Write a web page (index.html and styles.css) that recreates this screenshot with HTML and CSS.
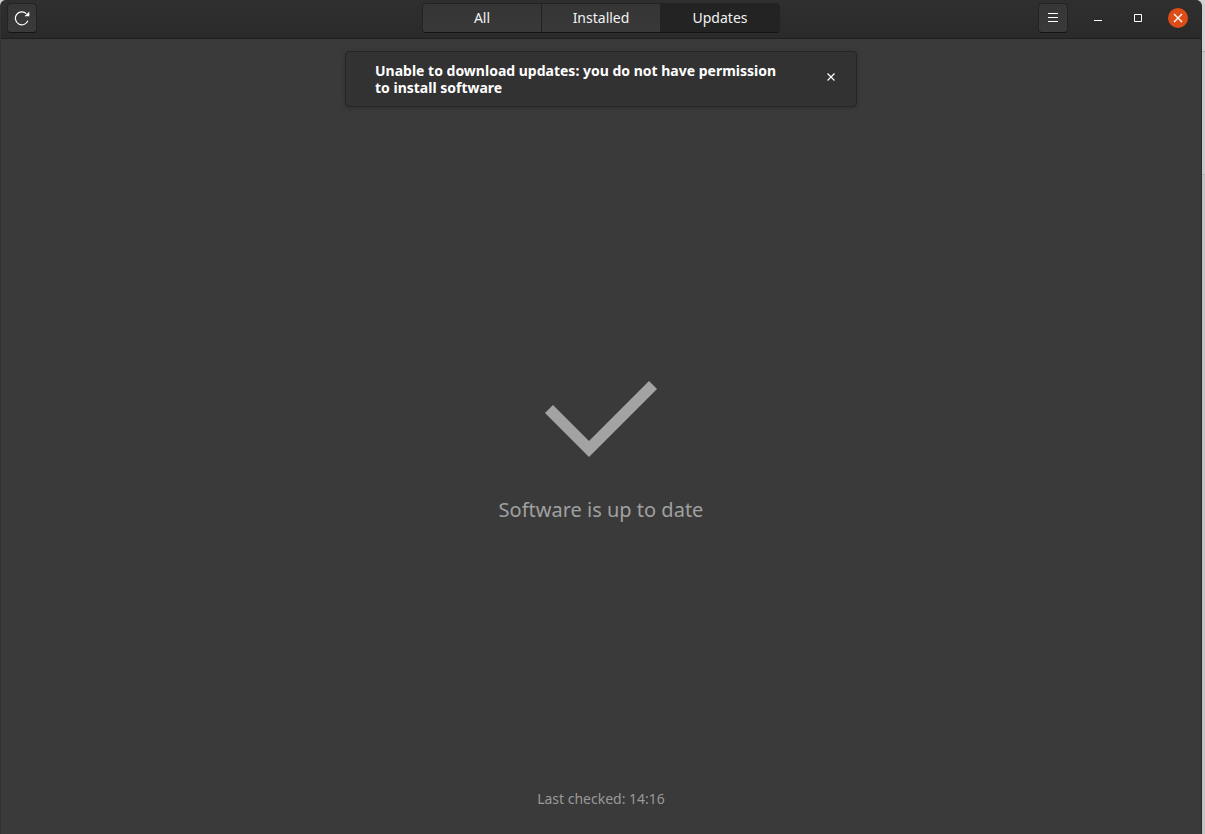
FILE: index.html
```html
<!DOCTYPE html>
<html lang="en">
<head>
    <meta charset="utf-8">
    <title>Software</title>
    <link rel="stylesheet" href="styles.css">
</head>
<body>
    <div class="window">
        <header class="headerbar">
            <div class="start">
                <button class="btn" aria-label="Refresh">
                    <svg width="16" height="16" viewBox="0 0 16 16">
                        <path d="M13.9 10.8A6.5 6.5 0 1 1 12.4 3.6" fill="none" stroke="#fff" stroke-width="1.2"/>
                        <path d="M15.3 1.4V6.2H10.5Z" fill="#fff"/>
                    </svg>
                </button>
            </div>

            <nav class="tabs">
                <button class="tab">All</button>
                <button class="tab">Installed</button>
                <button class="tab active">Updates</button>
            </nav>

            <div class="end">
                <button class="btn menu" aria-label="Menu">
                    <svg width="16" height="16" viewBox="0 0 16 16">
                        <path d="M3 3.5h10M3 7.5h10M3 11.5h10" stroke="#fff"/>
                    </svg>
                </button>
                <button class="control" aria-label="Minimize">
                    <svg width="16" height="16" viewBox="0 0 16 16">
                        <path d="M4 10.5h8" stroke="#fff"/>
                    </svg>
                </button>
                <button class="control" aria-label="Maximize">
                    <svg width="16" height="16" viewBox="0 0 16 16">
                        <path d="M4.5 4.5h7v7h-7z" fill="none" stroke="#fff"/>
                    </svg>
                </button>
                <button class="control close" aria-label="Close">
                    <svg width="16" height="16" viewBox="0 0 16 16">
                        <path d="M4 4l8 8M12 4l-8 8" stroke="#fff" stroke-width="1.4"/>
                    </svg>
                </button>
            </div>
        </header>

        <main class="content">
            <div class="toast" role="alert">
                <p>Unable to download updates: you do not have permission to install software</p>
                <button class="dismiss" aria-label="Dismiss">
                    <svg width="16" height="16" viewBox="0 0 16 16">
                        <path d="M4.5 4.5l7 7M11.5 4.5l-7 7" stroke="#fff" stroke-width="1.2"/>
                    </svg>
                </button>
            </div>

            <div class="status">
                <svg width="112" height="76" viewBox="0 0 112 76">
                    <path d="M0 32L8 24L44 60L104 0L112 8L44 76Z" fill="#a3a3a3"/>
                </svg>
                <h1>Software is up to date</h1>
            </div>

            <p class="checked">Last checked: 14:16</p>
        </main>
    </div>
</body>
</html>
```

FILE: styles.css
```css
* {
    box-sizing: border-box;
}
body {
    margin: 0;
    padding-right: 3px;
    background: linear-gradient(#d2d2d2 51px, #a8a8a8 51px, #a8a8a8 52px, #cacaca 52px, #cacaca 174px, #b4b4b4 174px, #b4b4b4 175px, #c4c4c4 175px);
    font-family: "Noto Sans", sans-serif;
    font-size: 14px;
    color: #f2f2f2;
}
h1, p {
    margin: 0;
}
button {
    font: inherit;
    color: inherit;
    padding: 0;
    border: none;
    background: none;
}
svg {
    display: block;
}
.window {
    display: flex;
    flex-direction: column;
    min-height: 100vh;
    background-color: #3a3a3a;
    border-left: 1px solid #323232;
    border-right: 1px solid #2c2c2c;
    border-radius: 6px 6px 0 0;
    overflow: hidden;
}
.headerbar {
    display: grid;
    grid-template-columns: 1fr 358px 1fr;
    align-items: center;
    height: 39px;
    padding: 0 6px 3px;
    background: linear-gradient(#2f2f2f, #2a2a2a);
    border-bottom: 1px solid #1f1f1f;
}
.start, .end {
    display: flex;
    align-items: center;
}
.end {
    justify-content: flex-end;
    gap: 20px;
    padding-right: 7px;
}
.btn {
    display: flex;
    align-items: center;
    justify-content: center;
    width: 30px;
    height: 30px;
    background: linear-gradient(#363636, #3a3a3a);
    border: 1px solid #232323;
    border-bottom-color: #141414;
    border-radius: 4px;
}
.tabs {
    display: flex;
    height: 30px;
    border: 1px solid #222;
    border-bottom-color: #141414;
    border-radius: 4px;
    overflow: hidden;
}
.tab {
    flex: 1;
    background: linear-gradient(#353535, #393939);
}
.tab + .tab {
    border-left: 1px solid #222;
}
.tab.active {
    background: #232323;
}
.control {
    display: flex;
    align-items: center;
    justify-content: center;
    width: 20px;
    height: 20px;
    border-radius: 50%;
}
.close {
    background-color: #de4c18;
}
.content {
    position: relative;
    flex: 1;
    display: flex;
    flex-direction: column;
    align-items: center;
}
.toast {
    position: absolute;
    top: 12px;
    display: flex;
    align-items: flex-start;
    justify-content: space-between;
    width: 512px;
    padding: 10px 16px 10px 29px;
    background-color: #323232;
    border: 1px solid #252525;
    border-radius: 4px;
    box-shadow: 0 1px 5px rgba(0, 0, 0, 0.2);
}
.toast p {
    width: 412px;
    line-height: 17px;
    font-weight: bold;
    color: #fff;
}
.dismiss {
    padding: 7px 1px;
}
.status {
    flex: 1;
    display: flex;
    flex-direction: column;
    align-items: center;
    justify-content: center;
    gap: 39px;
    padding-top: 76px;
}
h1 {
    font-size: 20px;
    line-height: 28px;
    font-weight: normal;
    color: #a0a0a0;
}
.checked {
    padding-bottom: 25px;
    line-height: 20px;
    color: #999;
}
```
